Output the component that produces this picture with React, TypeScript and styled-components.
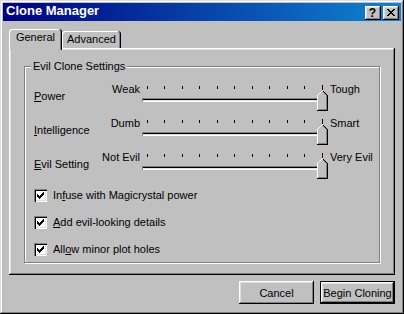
import styled, { createGlobalStyle } from 'styled-components';

const GlobalStyle = createGlobalStyle`
  * { box-sizing: border-box; }
  html, body { margin: 0; padding: 0; background: #c0c0c0; }
  body {
    font-family: "Liberation Sans", Arial, sans-serif;
    font-size: 11px;
    color: #000;
  }
`;

const bevel = `inset -1px -1px #000, inset 1px 1px #fff, inset -2px -2px #808080, inset 2px 2px #dfdfdf`;

const Window = styled.div`
  width: 404px;
  height: 314px;
  padding: 3px;
  background: #c0c0c0;
  display: flex;
  flex-direction: column;
  box-shadow: inset -1px -1px #000, inset 1px 1px #dfdfdf, inset -2px -2px #808080,
    inset 2px 2px #fff;
`;

const TitleBar = styled.div`
  height: 18px;
  display: flex;
  align-items: center;
  padding: 0 2px 0 3px;
  background: linear-gradient(90deg, #000080, #1084d0);
`;

const TitleText = styled.div`
  flex: 1;
  color: #fff;
  font-weight: bold;
  font-size: 13px;
  line-height: 16px;
  padding-bottom: 2px;
  white-space: nowrap;
`;

const CaptionButtons = styled.div`
  display: flex;
  gap: 2px;
  margin-top: 2px;
`;

const CaptionButton = styled.div`
  width: 16px;
  height: 14px;
  background: #c0c0c0;
  box-shadow: ${bevel};
  display: flex;
  align-items: center;
  justify-content: center;
  font-weight: bold;
  font-size: 12px;
  line-height: 14px;
  padding: 0 1px 1px 0;
`;

const TabStrip = styled.div`
  display: flex;
  align-items: flex-end;
  height: 19px;
  margin: 8px 6px 0;
  position: relative;
  z-index: 1;
`;

const Tab = styled.div<{ $active?: boolean; $w: number }>`
  width: ${(p) => p.$w}px;
  height: ${(p) => (p.$active ? 21 : 17)}px;
  margin-bottom: ${(p) => (p.$active ? -2 : 0)}px;
  padding-top: 2px;
  background: #c0c0c0;
  border-radius: 3px 3px 0 0;
  text-align: center;
  line-height: 13px;
  box-shadow: inset -1px 0 #000, inset 1px 1px #fff, inset -2px 0 #808080;
`;

const Panel = styled.div`
  margin: 0 6px;
  padding: 12px 15px;
  background: #c0c0c0;
  box-shadow: inset -1px -1px #000, inset 1px 1px #fff, inset -2px -2px #808080,
    inset 2px 2px #dfdfdf;
`;

const Group = styled.fieldset`
  margin: 0;
  padding: 10px 0 6px 9px;
  border: 1px solid #808080;
  box-shadow: inset 1px 1px #fff, 1px 1px #fff;
  min-width: 0;
`;

const Legend = styled.legend`
  margin-left: -3px;
  padding: 0 2px;
  line-height: 13px;
  background: #c0c0c0;
`;

const SliderRow = styled.div`
  display: grid;
  grid-template-columns: 66px 38px 186px auto;
  column-gap: 2px;
  height: 34px;
`;

const RowLabel = styled.div`
  padding-top: 7px;
  line-height: 13px;
  white-space: nowrap;
`;

const EndLabel = styled.div<{ $right?: boolean }>`
  line-height: 13px;
  white-space: nowrap;
  text-align: ${(p) => (p.$right ? 'right' : 'left')};
`;

const SliderBox = styled.div`
  position: relative;
  height: 34px;
`;

const TickMarks = styled.svg`
  display: block;
  margin-top: 2px;
`;

const Channel = styled.div`
  height: 4px;
  margin-top: 8px;
  box-shadow: inset 1px 1px #808080, inset 0 2px #000, inset -1px -1px #fff, inset 0 -2px #dfdfdf;
`;

const Thumb = styled.svg<{ $left: number }>`
  position: absolute;
  top: 7px;
  left: ${(p) => p.$left}px;
  display: block;
`;

const Checks = styled.div`
  display: flex;
  flex-direction: column;
  gap: 14px;
  margin-top: 4px;
`;

const CheckRow = styled.label`
  display: flex;
  align-items: center;
  gap: 6px;
  height: 13px;
  line-height: 13px;
  white-space: nowrap;
`;

const CheckBox = styled.span`
  width: 13px;
  height: 13px;
  flex: none;
  display: flex;
  align-items: center;
  justify-content: center;
  background: #fff;
  box-shadow: inset 1px 1px #808080, inset 2px 2px #000, inset -1px -1px #fff,
    inset -2px -2px #dfdfdf;
`;

const ButtonRow = styled.div`
  display: flex;
  justify-content: flex-end;
  gap: 6px;
  margin: 6px 6px 0;
`;

const Button = styled.button<{ $default?: boolean }>`
  width: 75px;
  height: 23px;
  padding: 0;
  font-family: "Liberation Sans", Arial, sans-serif;
  font-size: 11px;
  color: #000;
  background: #c0c0c0;
  border: ${(p) => (p.$default ? '1px solid #000' : 'none')};
  box-shadow: ${bevel};
`;

const px = (pts: [number, number][]) => pts.map(([x, y]) => `M${x} ${y}h1v1h-1z`).join('');

function ThumbIcon({ left }: { left: number }) {
  const white: [number, number][] = [[5, 0], [4, 1], [3, 2], [2, 3], [1, 4]];
  const black: [number, number][] = [[6, 1], [7, 2], [8, 3], [9, 4]];
  const gray: [number, number][] = [[6, 2], [7, 3], [8, 4]];
  for (let y = 5; y <= 19; y++) white.push([0, y]);
  for (let y = 5; y <= 20; y++) black.push([10, y]);
  for (let x = 0; x < 10; x++) black.push([x, 20]);
  for (let y = 5; y <= 19; y++) gray.push([9, y]);
  for (let x = 1; x < 9; x++) gray.push([x, 19]);
  return (
    <Thumb $left={left} width="11" height="21" viewBox="0 0 11 21" shapeRendering="crispEdges">
      <rect x="5" y="1" width="1" height="1" fill="#c0c0c0" />
      <rect x="4" y="2" width="3" height="1" fill="#c0c0c0" />
      <rect x="3" y="3" width="5" height="1" fill="#c0c0c0" />
      <rect x="2" y="4" width="7" height="1" fill="#c0c0c0" />
      <rect x="1" y="5" width="9" height="15" fill="#c0c0c0" />
      <path d={px(white)} fill="#fff" />
      <path d={px(gray)} fill="#808080" />
      <path d={px(black)} fill="#000" />
    </Thumb>
  );
}

function Slider({ label, min, max, value }: { label: React.ReactNode; min: string; max: string; value: number }) {
  const ticks = Array.from({ length: 11 }, (_, i) => Math.round(5 + i * 17.5 - 0.01));
  return (
    <SliderRow>
      <RowLabel>{label}</RowLabel>
      <EndLabel $right>{min}</EndLabel>
      <SliderBox>
        <TickMarks width="186" height="5" shapeRendering="crispEdges">
          {ticks.map((x, i) => (
            <rect key={i} x={x} y={i === 10 ? 0 : 1} width="1" height={i === 10 ? 5 : 3} fill="#000" />
          ))}
        </TickMarks>
        <Channel />
        <ThumbIcon left={Math.round(value * 175)} />
      </SliderBox>
      <EndLabel>{max}</EndLabel>
    </SliderRow>
  );
}

function Check({ children }: { children: React.ReactNode }) {
  return (
    <CheckRow>
      <CheckBox>
        <svg width="7" height="7" viewBox="0 0 7 7" shapeRendering="crispEdges">
          <path
            d="M6 0h1v3h-1zM5 1h1v3h-1zM4 2h1v3h-1zM0 2h1v3h-1zM1 3h1v3h-1zM3 3h1v3h-1zM2 4h1v3h-1z"
            fill="#000"
          />
        </svg>
      </CheckBox>
      <span>{children}</span>
    </CheckRow>
  );
}

export default function App() {
  return (
    <>
      <GlobalStyle />
      <Window>
        <TitleBar>
          <TitleText>Clone Manager</TitleText>
          <CaptionButtons>
            <CaptionButton>?</CaptionButton>
            <CaptionButton>
              <svg width="8" height="7" viewBox="0 0 8 7" shapeRendering="crispEdges">
                <path
                  d="M0 0h2v1h-2zM6 0h2v1h-2zM1 1h2v1h-2zM5 1h2v1h-2zM2 2h4v1h-4zM3 3h2v1h-2zM2 4h4v1h-4zM1 5h2v1h-2zM5 5h2v1h-2zM0 6h2v1h-2zM6 6h2v1h-2z"
                  fill="#000"
                />
              </svg>
            </CaptionButton>
          </CaptionButtons>
        </TitleBar>

        <TabStrip>
          <Tab $active $w={53}>General</Tab>
          <Tab $w={59}>Advanced</Tab>
        </TabStrip>

        <Panel>
          <Group>
            <Legend>Evil Clone Settings</Legend>
            <Slider label={<><u>P</u>ower</>} min="Weak" max="Tough" value={1} />
            <Slider label={<><u>I</u>ntelligence</>} min="Dumb" max="Smart" value={1} />
            <Slider label={<><u>E</u>vil Setting</>} min="Not Evil" max="Very Evil" value={1} />
            <Checks>
              <Check>In<u>f</u>use with Magicrystal power</Check>
              <Check><u>A</u>dd evil-looking details</Check>
              <Check>All<u>o</u>w minor plot holes</Check>
            </Checks>
          </Group>
        </Panel>

        <ButtonRow>
          <Button>Cancel</Button>
          <Button $default>Begin Cloning</Button>
        </ButtonRow>
      </Window>
    </>
  );
}
